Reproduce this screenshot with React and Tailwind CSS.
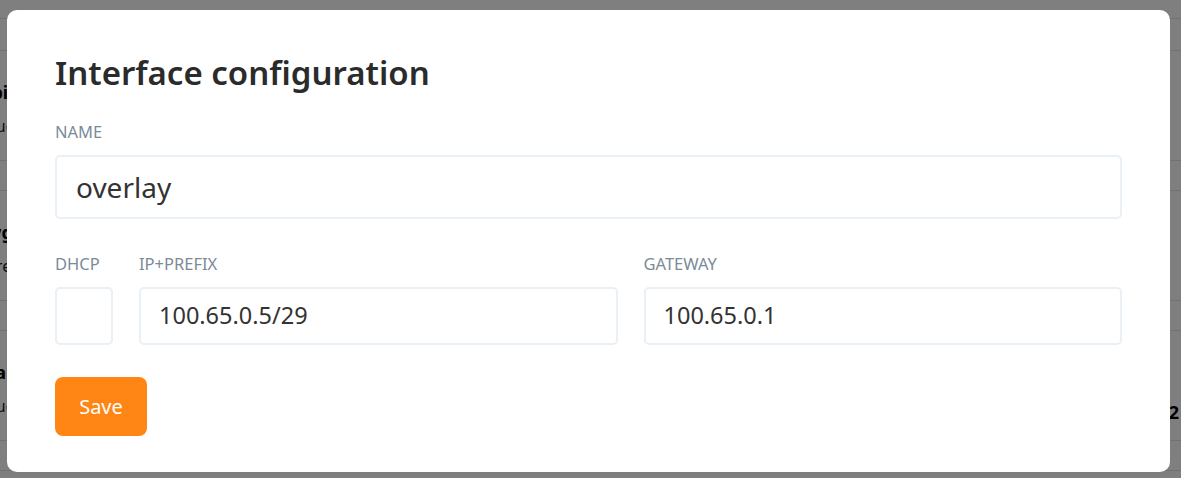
const rows = [
  { title: "ipip", sub: "gue tunnel", right: "" },
  { title: "wg0", sub: "gre", right: "" },
  { title: "cable", sub: "gue", right: "2" },
];

const Field = ({ label, value, className = "" }) => (
  <div className={`flex flex-col ${className}`}>
    <label className="text-[16.5px] leading-[20px] uppercase text-[#7b8b98] mb-[13px]">{label}</label>
    <div className="h-[58px] border-2 border-[#e9f0f6] rounded-[5px] flex items-center px-[18px] text-[23.5px] text-[#333]">
      {value}
    </div>
  </div>
);

export default function App() {
  return (
    <div
      className="relative w-[1181px] h-[478px] overflow-hidden bg-white"
      style={{ fontFamily: '"Noto Sans", "Open Sans", sans-serif' }}
    >
      {/* page behind the dialog */}
      <div className="border-b border-[#e3e3e3] h-[19px]" />
      <div className="border-b border-[#e3e3e3] h-[32px]" />
      {rows.map((r, i) => (
        <div key={i}>
          <div className="h-[110px] border-b border-[#e3e3e3] flex items-start justify-between pt-[28px] -ml-[14px] pr-[2px]">
            <div>
              <div className="font-bold text-[18px] text-black">{r.title}</div>
              <div className="text-[16px] text-[#222] mt-[8px]">{r.sub}</div>
            </div>
            <div className="font-bold text-[18px] mt-[40px]">{r.right}</div>
          </div>
          <div className="h-[30px] border-b border-[#e3e3e3]" />
        </div>
      ))}

      {/* overlay + dialog */}
      <div className="absolute inset-0 bg-black/50 pt-[10px] pl-[7px]">
        <div className="w-[1163px] h-[462px] bg-white rounded-[10px] px-[48px] pt-[42px]">
          <h2 className="text-[33px] leading-[42px] font-semibold text-[#2b2b2b]">
            Interface configuration
          </h2>
          <div className="mt-[28px] flex flex-col">
            <label className="text-[16.5px] leading-[20px] uppercase text-[#7b8b98] mb-[13px]">Name</label>
            <div className="h-[64px] border-2 border-[#e9f0f6] rounded-[5px] flex items-center px-[19px] text-[28px] text-[#333]">
              overlay
            </div>
          </div>
          <div className="mt-[35px] grid grid-cols-[58px_1fr_1fr] gap-x-[26px]">
            <Field label="DHCP" value="" />
            <Field label="IP+prefix" value="100.65.0.5/29" />
            <Field label="Gateway" value="100.65.0.1" />
          </div>
          <button className="mt-[32px] h-[59px] w-[92px] rounded-[8px] bg-[#ff8515] text-white text-[20px]">
            Save
          </button>
        </div>
      </div>
    </div>
  );
}
